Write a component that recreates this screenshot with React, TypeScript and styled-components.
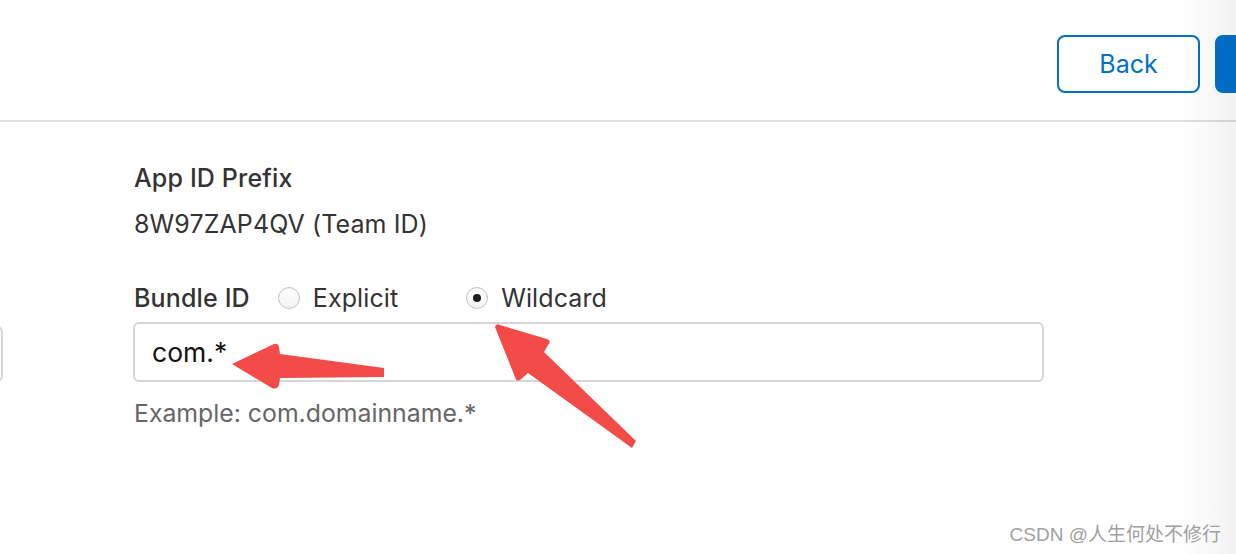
import React from "react";
import styled, { createGlobalStyle } from "styled-components";

const Global = createGlobalStyle`
  html, body { margin: 0; padding: 0; background: #fff; overflow: hidden; }
  body { font-family: "Inter", "Liberation Sans", Arial, sans-serif; color: #333; }
  * { box-sizing: border-box; }
`;

const Page = styled.div`
  position: relative;
  width: 1236px;
  height: 554px;
  overflow: hidden;
  background: #fff;
`;

const Header = styled.header`
  height: 122px;
  border-bottom: 2px solid #dedede;
  display: flex;
  justify-content: flex-end;
  align-items: flex-start;
  padding-top: 35px;
`;

const ButtonGroup = styled.div`
  display: flex;
  gap: 15px;
  margin-right: -139px;
`;

const Button = styled.button<{ $primary?: boolean }>`
  height: 58px;
  width: ${(p) => (p.$primary ? "160px" : "143px")};
  border-radius: 8px;
  border: 2px solid #0070c9;
  background: ${(p) => (p.$primary ? "#0070c9" : "#fff")};
  color: ${(p) => (p.$primary ? "#fff" : "#0070c9")};
  font-family: "Inter", "Liberation Sans", Arial, sans-serif;
  font-size: 25px;
  font-weight: 400;
  padding: 0;
  white-space: nowrap;
`;

const Content = styled.main`
  padding: 40px 0 0 0;
  display: flex;
  flex-direction: column;
`;

const Section = styled.section`
  padding-left: 134px;
  display: flex;
  flex-direction: column;
`;

const Label = styled.div`
  font-size: 25px;
  line-height: 32px;
  font-weight: 500;
  color: #333;
  letter-spacing: 0.15px;
`;

const Value = styled.div`
  font-size: 25px;
  line-height: 32px;
  color: #333;
  margin-top: 14px;
  letter-spacing: 0.1px;
`;

const RadioRow = styled.div`
  display: flex;
  align-items: center;
  margin-top: 42px;
  padding-left: 134px;
  height: 32px;
`;

const RadioOption = styled.label<{ $gap: number }>`
  display: flex;
  align-items: center;
  gap: 13px;
  margin-left: ${(p) => p.$gap}px;
  font-size: 25px;
  color: #333;
  letter-spacing: 0.1px;
`;

const RadioCircle = styled.span<{ $checked?: boolean }>`
  width: 22px;
  height: 22px;
  border-radius: 50%;
  border: 1px solid #c4c4c4;
  background: linear-gradient(#fff, #f3f3f3);
  box-shadow: inset 0 1px 1px rgba(0,0,0,0.04);
  display: flex;
  align-items: center;
  justify-content: center;
  &::after {
    content: "";
    width: 8px;
    height: 8px;
    border-radius: 50%;
    background: #1d1d1d;
    display: ${(p) => (p.$checked ? "block" : "none")};
  }
`;

const FieldRow = styled.div`
  display: flex;
  align-items: flex-start;
  margin-top: 8px;
`;

const GhostField = styled.div`
  flex: 0 0 300px;
  margin-left: -297px;
  margin-top: 4px;
  height: 56px;
  border: 2px solid #d6d6d6;
  border-radius: 6px;
`;

const TextInput = styled.div`
  margin-left: 130px;
  width: 911px;
  height: 60px;
  border: 2px solid #d6d6d6;
  border-radius: 6px;
  padding-left: 17px;
  display: flex;
  align-items: center;
  font-size: 26.5px;
  color: #111;
`;

const Hint = styled.div`
  padding-left: 134px;
  margin-top: 16px;
  font-size: 24.8px;
  line-height: 30px;
  color: #666;
`;

const Overlay = styled.svg`
  position: absolute;
  left: 0;
  top: 0;
  pointer-events: none;
`;

const EdgeShade = styled.div`
  position: absolute;
  top: 0;
  right: 0;
  width: 56px;
  height: 100%;
  background: linear-gradient(to right, rgba(0,0,0,0), rgba(0,0,0,0.05));
  pointer-events: none;
`;

const Watermark = styled.div`
  position: absolute;
  right: 15px;
  bottom: 8px;
  font-family: "Liberation Sans", "Noto Sans CJK SC", sans-serif;
  font-size: 19px;
  color: #a0a0a0;
`;

export default function App() {
  return (
    <Page>
      <Global />
      <Header>
        <ButtonGroup>
          <Button>Back</Button>
          <Button $primary aria-label="Continue" />
        </ButtonGroup>
      </Header>
      <Content>
        <Section>
          <Label>App ID Prefix</Label>
          <Value>8W97ZAP4QV (Team ID)</Value>
        </Section>
        <RadioRow>
          <Label>Bundle ID</Label>
          <RadioOption $gap={28}>
            <RadioCircle />
            Explicit
          </RadioOption>
          <RadioOption $gap={68}>
            <RadioCircle $checked />
            Wildcard
          </RadioOption>
        </RadioRow>
        <FieldRow>
          <GhostField />
          <TextInput>com.*</TextInput>
        </FieldRow>
        <Hint>Example: com.domainname.*</Hint>
      </Content>
      <Overlay width="1236" height="554" viewBox="0 0 1236 554">
        <path
          d="M232 364 L274 344 Q278 343 279 347 L280 354 L384 368 L384 377 L280 378 L279 385 Q277 390 272 388 Z"
          fill="#f24b48"
        />
        <path
          d="M495 327 Q496 323 500 325 L547 339 Q552 341 548 345 L544 352 L636 441 L632 448 L528 373 L520 380 Q516 382 515 377 Z"
          fill="#f24b48"
        />
      </Overlay>
      <EdgeShade />
      <Watermark>CSDN @人生何处不修行</Watermark>
    </Page>
  );
}
